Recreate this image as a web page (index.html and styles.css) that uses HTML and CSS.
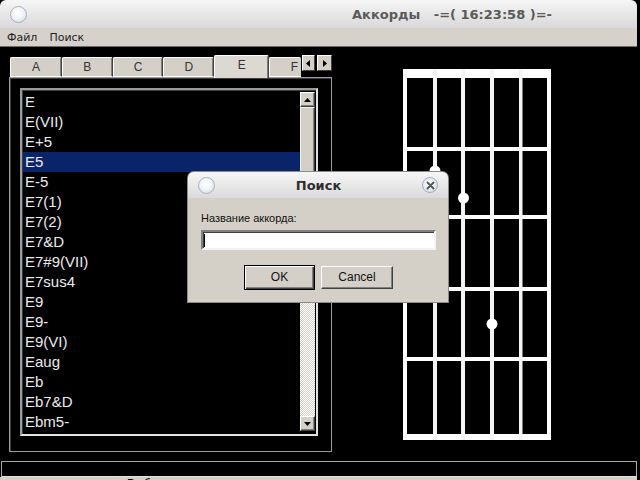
FILE: index.html
```html
<!DOCTYPE html>
<html>
<head>
<meta charset="utf-8">
<link rel="stylesheet" href="styles.css">
</head>
<body>
<div class="window">
  <div class="titlebar">
    <span class="orb"></span>
    <span class="title">Аккорды   -=( 16:23:58 )=-</span>
  </div>
  <div class="menubar"><span>Файл</span><span>Поиск</span></div>
  <div class="main">
    <div class="left">
      <div class="tabs">
        <div class="tab t-a">A</div>
        <div class="tab">B</div>
        <div class="tab">C</div>
        <div class="tab">D</div>
        <div class="tab sel">E</div>
        <div class="tab last">F</div>
        <div class="tabscroll">
          <span class="sbtn"><svg width="5" height="7" viewBox="0 0 5 7"><polygon points="4,0 4,7 0,3.5" fill="#000"/></svg></span>
          <span class="sbtn"><svg width="5" height="7" viewBox="0 0 5 7"><polygon points="1,0 1,7 5,3.5" fill="#000"/></svg></span>
        </div>
      </div>
      <div class="panel">
        <div class="listbox">
          <ul class="items">
            <li>E</li>
            <li>E(VII)</li>
            <li>E+5</li>
            <li class="selected">E5</li>
            <li>E-5</li>
            <li>E7(1)</li>
            <li>E7(2)</li>
            <li>E7&amp;D</li>
            <li>E7#9(VII)</li>
            <li>E7sus4</li>
            <li>E9</li>
            <li>E9-</li>
            <li>E9(VI)</li>
            <li>Eaug</li>
            <li>Eb</li>
            <li>Eb7&amp;D</li>
            <li>Ebm5-</li>
          </ul>
          <div class="vscroll">
            <div class="arrow"><svg width="7" height="4" viewBox="0 0 7 4"><polygon points="0,4 7,4 3.5,0" fill="#000"/></svg></div>
            <div class="thumb"></div>
            <div class="track"></div>
            <div class="arrow"><svg width="7" height="4" viewBox="0 0 7 4"><polygon points="0,0 7,0 3.5,4" fill="#000"/></svg></div>
          </div>
        </div>
      </div>
    </div>
    <svg class="fret" width="148" height="372" viewBox="0 0 148 372">
      <rect x="0" y="0" width="148" height="9" fill="#fff"/>
      <rect x="0" y="78" width="148" height="4" fill="#fff"/>
      <rect x="0" y="146" width="148" height="4" fill="#fff"/>
      <rect x="0" y="218" width="148" height="4" fill="#fff"/>
      <rect x="0" y="288" width="148" height="4" fill="#fff"/>
      <rect x="0" y="365" width="148" height="6" fill="#fff"/>
      <rect x="0" y="0" width="4" height="371" fill="#fff"/>
      <rect x="30" y="0" width="4" height="371" fill="#f4f4f4"/>
      <rect x="58" y="0" width="4" height="371" fill="#f4f4f4"/>
      <rect x="87" y="0" width="4" height="371" fill="#f4f4f4"/>
      <rect x="116" y="0" width="3.5" height="371" fill="#f4f4f4"/>
      <rect x="144" y="0" width="4" height="371" fill="#fff"/>
      <circle cx="32" cy="102" r="5.5" fill="#fff"/>
      <circle cx="60.5" cy="129" r="5.5" fill="#fff"/>
      <circle cx="89" cy="255" r="5.5" fill="#fff"/>
    </svg>
  </div>
  <div class="status"></div>
  <div class="statusline">Выбор аккорда</div>

  <div class="dialog">
    <div class="dtitle">
      <span class="orb"></span>
      <span class="dname">Поиск</span>
      <span class="close"><svg width="9" height="9" viewBox="0 0 9 9"><path d="M1.5 1.5 L7.5 7.5 M7.5 1.5 L1.5 7.5" stroke="#555" stroke-width="1.8" stroke-linecap="round"/></svg></span>
    </div>
    <div class="dbody">
      <div class="dlabel">Название аккорда:</div>
      <div class="dinput"><span class="caret"></span></div>
      <div class="dbuttons">
        <div class="btn default">OK</div>
        <div class="btn">Cancel</div>
      </div>
    </div>
  </div>
</div>
</body>
</html>
```
FILE: styles.css
```css
html, body {
  margin: 0;
  padding: 0;
  background: #000;
}
.window {
  position: relative;
  width: 637px;
  height: 480px;
  background: #000;
  overflow: hidden;
  border-radius: 6px 6px 0 0;
}
.titlebar {
  height: 28px;
  display: flex;
  align-items: center;
  padding-left: 10px;
  background: linear-gradient(to bottom, #f6f6f6, #e4e4e4 60%, #d9d9d9);
  box-sizing: border-box;
}
.orb {
  width: 17px;
  height: 17px;
  border-radius: 50%;
  box-sizing: border-box;
  border: 1px solid #a9b0bd;
  background: radial-gradient(circle at 45% 40%, #ffffff 0%, #f2f4f8 45%, #cdd3de 100%);
  flex: none;
}
.title {
  margin-left: 325px;
  font-family: "DejaVu Sans", sans-serif;
  font-weight: bold;
  font-size: 13px;
  color: #5a5a5a;
  white-space: pre;
}
.menubar {
  height: 18px;
  border-bottom: 1px solid #6a6a6a;
  background: #d6d2cb;
  display: flex;
  align-items: center;
  gap: 12px;
  padding-left: 7px;
  font-family: "DejaVu Sans", sans-serif;
  font-size: 11px;
  color: #1e1e1e;
}
.main {
  height: 414px;
  display: flex;
  align-items: flex-start;
}
.left {
  margin-left: 9px;
  margin-top: 8px;
  width: 323px;
}
.tabs {
  height: 22px;
  display: flex;
  align-items: flex-end;
  padding-left: 1px;
  position: relative;
  z-index: 2;
}
.tab {
  width: 51px;
  height: 20px;
  box-sizing: border-box;
  background: #d4d0c8;
  border-top: 1px solid #fff;
  border-left: 1px solid #fff;
  border-right: 1px solid #404040;
  box-shadow: inset -1px 0 #808080;
  text-align: center;
  font-family: "Liberation Sans", sans-serif;
  font-size: 12px;
  line-height: 18px;
  color: #333;
  border-radius: 2px 2px 0 0;
  border-bottom: 1px solid #fff;
}
.t-a { width: 52px; }
.tab.sel {
  width: 55px;
  height: 23px;
  margin-bottom: -1px;
  border-bottom: none;
  background: #dcd9d2;
  line-height: 19px;
}
.tab.last {
  width: 32px;
  text-align: right;
  padding-right: 3px;
  border-right: none;
  box-shadow: none;
}
.tabscroll {
  display: flex;
  gap: 2px;
  height: 20px;
  align-items: flex-start;
  padding-top: 1px;
  box-sizing: border-box;
  margin-left: 1px;
  align-self: flex-end;
  margin-bottom: 3px;
}
.sbtn {
  width: 13px;
  height: 16px;
  box-sizing: border-box;
  background: #d4d0c8;
  border-top: 1px solid #fff;
  border-left: 1px solid #fff;
  border-right: 1px solid #404040;
  border-bottom: 1px solid #404040;
  display: flex;
  align-items: center;
  justify-content: center;
}
.sbtn + .sbtn { width: 15px; }
.panel {
  height: 375px;
  box-sizing: border-box;
  border: 1px solid #9c9c9c;
  box-shadow: inset 1px 1px #3c3c3c;
  background: #000;
  padding: 10px 0 0 10px;
}
.listbox {
  width: 298px;
  height: 348px;
  box-sizing: border-box;
  border: 2px solid;
  border-color: #9a9a9a #e2e2e2 #e2e2e2 #9a9a9a;
  box-shadow: inset 1px 1px #404040;
  display: flex;
  background: #000;
}
.items {
  list-style: none;
  margin: 0;
  padding: 2px 0 0 1px;
  flex: 1;
  overflow: hidden;
  height: 342px;
}
.items li {
  height: 20px;
  line-height: 20px;
  padding-left: 2px;
  font-family: "Liberation Sans", sans-serif;
  font-size: 15px;
  color: #ececec;
  white-space: nowrap;
}
.items li.selected {
  background: #0a246a;
}
.vscroll {
  width: 15px;
  margin: 2px 1px 3px 0;
  display: flex;
  flex-direction: column;
}
.arrow {
  height: 15px;
  box-sizing: border-box;
  background: #d4d0c8;
  border-top: 1px solid #fff;
  border-left: 1px solid #fff;
  border-right: 1px solid #404040;
  border-bottom: 1px solid #404040;
  box-shadow: inset -1px -1px #808080;
  display: flex;
  align-items: center;
  justify-content: center;
  flex: none;
}
.thumb {
  height: 150px;
  box-sizing: border-box;
  background: #d4d0c8;
  border-top: 1px solid #f0f0f0;
  border-left: 1px solid #f0f0f0;
  border-right: 1px solid #404040;
  border-bottom: 1px solid #404040;
  box-shadow: inset -1px -1px #808080;
  flex: none;
}
.track {
  flex: 1;
  background: repeating-conic-gradient(#ffffff 0 25%, #d4d0c8 0 50%) 0 0 / 2px 2px;
}
.fret {
  display: block;
  margin-left: 71px;
  margin-top: 22px;
  flex: none;
}
.status {
  height: 16px;
  margin-left: 1px;
  width: 636px;
  box-sizing: border-box;
  border: 1px solid #a8a8a8;
  border-bottom-color: #e0e0e0;
  background: #000;
}
.statusline {
  height: 3px;
  background: #d4d0c8;
  overflow: hidden;
  padding-left: 127px;
  font-family: "Liberation Sans", sans-serif;
  font-size: 12px;
  line-height: 14px;
  color: #000;
}
.dialog {
  position: absolute;
  left: 188px;
  top: 172px;
  width: 260px;
  height: 130px;
  background: #d4d0c8;
  border-radius: 6px 6px 0 0;
  box-shadow: 0 0 0 1px #8a8a8a;
  overflow: hidden;
}
.dtitle {
  height: 26px;
  display: flex;
  align-items: center;
  padding: 0 10px;
  background: linear-gradient(to bottom, #f6f6f6, #e6e6e6 60%, #dadada);
  position: relative;
}
.dname {
  flex: 1;
  text-align: center;
  font-family: "DejaVu Sans", sans-serif;
  font-weight: bold;
  font-size: 13px;
  color: #2e2e2e;
}
.close {
  width: 16px;
  height: 16px;
  border-radius: 50%;
  box-sizing: border-box;
  border: 1px solid #a4abb8;
  background: radial-gradient(circle at 45% 40%, #ffffff, #e4e7ee 60%, #c9cfdb);
  display: flex;
  align-items: center;
  justify-content: center;
  flex: none;
}
.dbody {
  padding: 13px 12px 0 13px;
}
.dlabel {
  font-family: "Liberation Sans", sans-serif;
  font-size: 11px;
  line-height: 14px;
  color: #111;
}
.dinput {
  margin-top: 5px;
  height: 20px;
  width: 235px;
  box-sizing: border-box;
  background: #fff;
  border: 2px solid;
  border-color: #808080 #f4f4f4 #f4f4f4 #808080;
  box-shadow: inset 1px 1px #404040;
  position: relative;
}
.caret {
  position: absolute;
  left: 1px;
  top: 2px;
  width: 1px;
  height: 13px;
  background: #000;
}
.dbuttons {
  margin-top: 15px;
  display: flex;
  justify-content: center;
  align-items: center;
  gap: 6px;
}
.btn {
  width: 72px;
  height: 23px;
  box-sizing: border-box;
  background: #d4d0c8;
  border-top: 1px solid #fff;
  border-left: 1px solid #fff;
  border-right: 1px solid #404040;
  border-bottom: 1px solid #404040;
  box-shadow: inset -1px -1px #808080;
  font-family: "Liberation Sans", sans-serif;
  font-size: 12px;
  line-height: 21px;
  text-align: center;
  color: #111;
}
.btn.default {
  width: 71px;
  height: 25px;
  border: 1px solid #000;
  box-shadow: inset 1px 1px #fff, inset -1px -1px #404040, inset -2px -2px #808080;
  line-height: 23px;
}
```
